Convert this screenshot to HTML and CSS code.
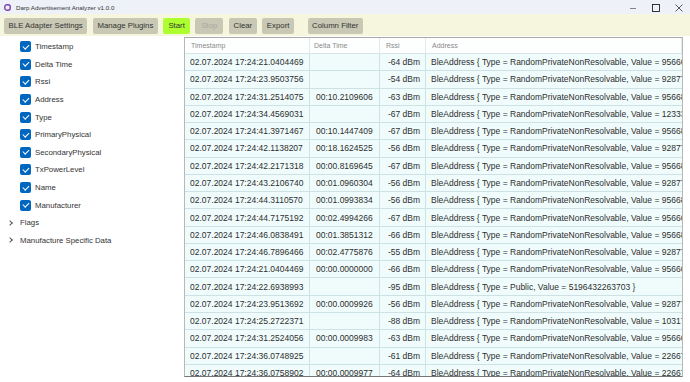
FILE: index.html
```html
<!DOCTYPE html>
<html>
<head>
<meta charset="utf-8">
<link rel="stylesheet" href="styles.css">
</head>
<body>
<div class="window">
  <div class="titlebar">
    <div class="title">
      <svg class="appicon" width="7" height="7" viewBox="0 0 7 7"><rect x="0.8" y="0.8" width="5.4" height="5.4" rx="2" fill="none" stroke="#7a3fb0" stroke-width="1.4"/></svg>
      <span>Darp Advertisement Analyzer v1.0.0</span>
    </div>
    <div class="controls">
      <svg width="10" height="10" viewBox="0 0 10 10"><line x1="2" y1="5.5" x2="8" y2="5.5" stroke="#666" stroke-width="0.8"/></svg>
      <svg width="10" height="10" viewBox="0 0 10 10"><rect x="1.5" y="1.5" width="7" height="7" fill="none" stroke="#222" stroke-width="0.9"/></svg>
      <svg width="10" height="10" viewBox="0 0 10 10"><path d="M1.5 1.5 L8.5 8.5 M8.5 1.5 L1.5 8.5" stroke="#333" stroke-width="0.8"/></svg>
    </div>
  </div>
  <div class="toolbar">
    <button class="btn">BLE Adapter Settings</button>
    <button class="btn">Manage Plugins</button>
    <button class="btn start">Start</button>
    <button class="btn disabled">Stop</button>
    <button class="btn">Clear</button>
    <button class="btn">Export</button>
    <button class="btn sep">Column Filter</button>
  </div>
  <div class="main">
    <div class="tree">
      <div class="item"><span class="cb"></span>Timestamp</div>
      <div class="item"><span class="cb"></span>Delta Time</div>
      <div class="item"><span class="cb"></span>Rssi</div>
      <div class="item"><span class="cb"></span>Address</div>
      <div class="item"><span class="cb"></span>Type</div>
      <div class="item"><span class="cb"></span>PrimaryPhysical</div>
      <div class="item"><span class="cb"></span>SecondaryPhysical</div>
      <div class="item"><span class="cb"></span>TxPowerLevel</div>
      <div class="item"><span class="cb"></span>Name</div>
      <div class="item"><span class="cb"></span>Manufacturer</div>
      <div class="group"><span class="chev"></span>Flags</div>
      <div class="group"><span class="chev"></span>Manufacture Specific Data</div>
    </div>
    <div class="grid">
      <div class="row head"><div class="c ts">Timestamp</div><div class="c dt">Delta Time</div><div class="c rs">Rssi</div><div class="c ad">Address</div></div>
      <div class="row"><div class="c ts">02.07.2024 17:24:21.0404469</div><div class="c dt"></div><div class="c rs">-64 dBm</div><div class="c ad">BleAddress { Type = RandomPrivateNonResolvable, Value = 956661</div></div>
      <div class="row"><div class="c ts">02.07.2024 17:24:23.9503756</div><div class="c dt"></div><div class="c rs">-54 dBm</div><div class="c ad">BleAddress { Type = RandomPrivateNonResolvable, Value = 928775</div></div>
      <div class="row"><div class="c ts">02.07.2024 17:24:31.2514075</div><div class="c dt">00:10.2109606</div><div class="c rs">-63 dBm</div><div class="c ad">BleAddress { Type = RandomPrivateNonResolvable, Value = 956681</div></div>
      <div class="row"><div class="c ts">02.07.2024 17:24:34.4569031</div><div class="c dt"></div><div class="c rs">-67 dBm</div><div class="c ad">BleAddress { Type = RandomPrivateNonResolvable, Value = 123339</div></div>
      <div class="row"><div class="c ts">02.07.2024 17:24:41.3971467</div><div class="c dt">00:10.1447409</div><div class="c rs">-67 dBm</div><div class="c ad">BleAddress { Type = RandomPrivateNonResolvable, Value = 956681</div></div>
      <div class="row"><div class="c ts">02.07.2024 17:24:42.1138207</div><div class="c dt">00:18.1624525</div><div class="c rs">-56 dBm</div><div class="c ad">BleAddress { Type = RandomPrivateNonResolvable, Value = 928775</div></div>
      <div class="row"><div class="c ts">02.07.2024 17:24:42.2171318</div><div class="c dt">00:00.8169645</div><div class="c rs">-67 dBm</div><div class="c ad">BleAddress { Type = RandomPrivateNonResolvable, Value = 956681</div></div>
      <div class="row"><div class="c ts">02.07.2024 17:24:43.2106740</div><div class="c dt">00:01.0960304</div><div class="c rs">-56 dBm</div><div class="c ad">BleAddress { Type = RandomPrivateNonResolvable, Value = 928775</div></div>
      <div class="row"><div class="c ts">02.07.2024 17:24:44.3110570</div><div class="c dt">00:01.0993834</div><div class="c rs">-56 dBm</div><div class="c ad">BleAddress { Type = RandomPrivateNonResolvable, Value = 956681</div></div>
      <div class="row"><div class="c ts">02.07.2024 17:24:44.7175192</div><div class="c dt">00:02.4994266</div><div class="c rs">-67 dBm</div><div class="c ad">BleAddress { Type = RandomPrivateNonResolvable, Value = 956661</div></div>
      <div class="row"><div class="c ts">02.07.2024 17:24:46.0838491</div><div class="c dt">00:01.3851312</div><div class="c rs">-66 dBm</div><div class="c ad">BleAddress { Type = RandomPrivateNonResolvable, Value = 956681</div></div>
      <div class="row"><div class="c ts">02.07.2024 17:24:46.7896466</div><div class="c dt">00:02.4775876</div><div class="c rs">-55 dBm</div><div class="c ad">BleAddress { Type = RandomPrivateNonResolvable, Value = 928775</div></div>
      <div class="row"><div class="c ts">02.07.2024 17:24:21.0404469</div><div class="c dt">00:00.0000000</div><div class="c rs">-66 dBm</div><div class="c ad">BleAddress { Type = RandomPrivateNonResolvable, Value = 956661</div></div>
      <div class="row"><div class="c ts">02.07.2024 17:24:22.6938993</div><div class="c dt"></div><div class="c rs">-95 dBm</div><div class="c ad">BleAddress { Type = Public, Value = 5196432263703 }</div></div>
      <div class="row"><div class="c ts">02.07.2024 17:24:23.9513692</div><div class="c dt">00:00.0009926</div><div class="c rs">-56 dBm</div><div class="c ad">BleAddress { Type = RandomPrivateNonResolvable, Value = 928775</div></div>
      <div class="row"><div class="c ts">02.07.2024 17:24:25.2722371</div><div class="c dt"></div><div class="c rs">-88 dBm</div><div class="c ad">BleAddress { Type = RandomPrivateNonResolvable, Value = 1031706</div></div>
      <div class="row"><div class="c ts">02.07.2024 17:24:31.2524056</div><div class="c dt">00:00.0009983</div><div class="c rs">-63 dBm</div><div class="c ad">BleAddress { Type = RandomPrivateNonResolvable, Value = 956661</div></div>
      <div class="row"><div class="c ts">02.07.2024 17:24:36.0748925</div><div class="c dt"></div><div class="c rs">-61 dBm</div><div class="c ad">BleAddress { Type = RandomPrivateNonResolvable, Value = 226672</div></div>
      <div class="row"><div class="c ts">02.07.2024 17:24:36.0758902</div><div class="c dt">00:00.0009977</div><div class="c rs">-64 dBm</div><div class="c ad">BleAddress { Type = RandomPrivateNonResolvable, Value = 226672</div></div>
    </div>
  </div>
</div>
</body>
</html>
```
FILE: styles.css
```css
* { box-sizing: border-box; }
html, body { margin: 0; padding: 0; background: #ffffff; }
body { width: 690px; height: 382px; overflow: hidden; font-family: "Liberation Sans", Arial, sans-serif; color: #333; }
.window { width: 690px; height: 382px; display: flex; flex-direction: column; }
.titlebar { height: 14px; background: #eef1f8; display: flex; align-items: center; justify-content: space-between; padding: 0 6px 0 4px; }
.title { display: flex; align-items: center; gap: 5px; font-size: 6.2px; color: #333; padding-top: 1px; }
.appicon { display: block; }
.controls { display: flex; gap: 13px; align-items: center; padding-top: 1px; }
.controls svg { display: block; }
.toolbar { height: 22px; background: #f6f6df; display: flex; align-items: center; gap: 5.5px; padding: 1px 0 0 4px; }
.btn { height: 16px; border: none; border-radius: 2px; background: #c8c8b4; font-family: "Liberation Sans", Arial, sans-serif; font-size: 7.8px; color: #333; padding: 0 4.6px; margin: 0; line-height: 16px; }
.btn.start { background: #adff2f; padding: 0 5px; }
.btn.disabled { color: #a8a8a0; padding: 0 6px; }
.btn.sep { margin-left: 8px; }
.main { flex: 1; display: grid; grid-template-columns: 184px 499px; align-items: start; padding-top: 1px; }
.tree { padding-top: 1px; font-size: 7.8px; color: #333; }
.item { height: 17.6px; display: flex; align-items: center; padding-left: 20px; gap: 4px; }
.cb { width: 11px; height: 11px; border-radius: 2px; background: #0067c0; position: relative; flex: none; }
.cb::after { content: ""; position: absolute; left: 3.6px; top: 1.6px; width: 2.6px; height: 5px; border: solid #fff; border-width: 0 1px 1px 0; transform: rotate(45deg); }
.group { height: 17.6px; display: flex; align-items: center; padding-left: 8px; gap: 8px; }
.chev { width: 4px; height: 4px; border: solid #555; border-width: 0.8px 0.8px 0 0; transform: rotate(45deg); flex: none; }
.grid { height: 340px; overflow: hidden; border-top: 1px solid #a8a8a8; border-left: 1px solid #b8b8b8; border-right: 1px solid #b8b8b8; border-bottom: 1px solid #777; background: #fff; }
.row { display: grid; grid-template-columns: 125px 70px 46px 1fr; height: 17.28px; background: #f0fcfc; border-bottom: 1px solid #cde2e5; font-size: 8.5px; color: #2e2e2e; }
.row.head { height: 16px; background: #fdfefe; font-size: 7px; color: #8a8a8a; border-bottom: 1px solid #d8e6e8; }
.c { display: flex; align-items: center; white-space: nowrap; overflow: hidden; border-right: 1px solid #cde2e5; padding-left: 5px; }
.row.head .c { border-right: 1px solid #e0eaec; padding-left: 6px; }
.c.rs { justify-content: flex-end; padding-left: 0; padding-right: 5px; }
.row.head .c.rs { justify-content: flex-start; padding-left: 6px; }
.c.dt { padding-left: 6px; }
.row.head .c.dt { padding-left: 4px; }
.c.ad { border-right: none; }
```
